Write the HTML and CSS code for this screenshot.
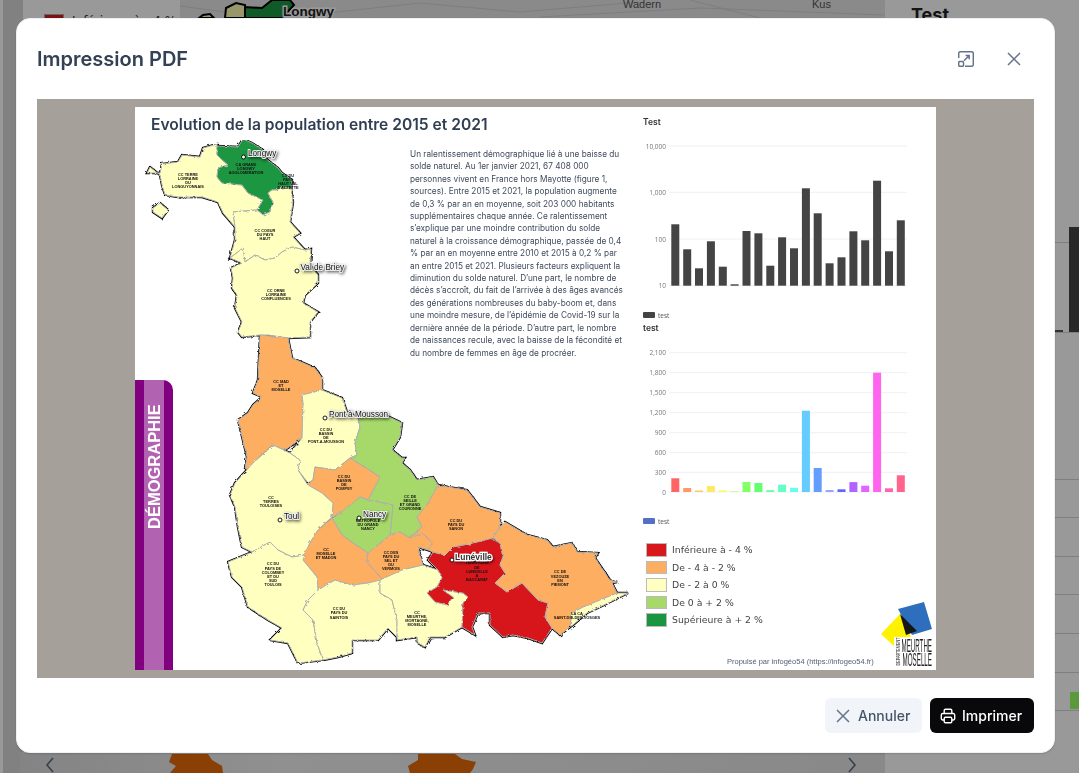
FILE: index.html
```html
<!DOCTYPE html>
<html lang="fr">
  <head>
    <meta charset="UTF-8" />
    <meta name="viewport" content="width=device-width, initial-scale=1.0" />
    <title>Impression PDF</title>
    <link rel="stylesheet" href="styles.css">
  </head>
  <body>
    <div class="page">
      <div class="rail"></div>
      <div class="side">
        <div class="side-key"><span class="side-swatch"></span>Inférieure à - 4 %</div>
      </div>
      <div class="bgmap">
        <svg class="bgmap-svg" viewBox="180 0 705 773" width="705" height="773">
          <path class="tile" d="M180 6 L240 14 M300 16 L420 3 L520 12 L640 2 M540 17 L700 8 L885 15 M690 0 L760 18" />
          <text class="tile-label" x="623" y="8">Wadern</text>
          <text class="tile-label" x="812" y="8">Kus</text>
          <polygon class="bg-yellow" points="199,18 203,15 210,14 214,18" />
          <polygon class="bg-yellow" points="225,18 226,8 236,3 245,5 245,18" />
          <polygon class="bg-green" points="245,18 245,7 262,8 272,0 290,0 294,5 282,18" />
          <text class="bg-city" x="283" y="16">Longwy</text>
        </svg>
      </div>
      <div class="right">
        <div class="right-title">Test</div>
        <div class="right-rows">
          <div class="right-row"></div>
          <div class="right-row right-row-bar"><i class="tick"></i><i class="bar"></i></div>
          <div class="right-gap"></div>
          <div class="right-row"></div>
          <div class="right-row"></div>
          <div class="right-row"></div>
          <div class="right-row"></div>
          <div class="right-row"></div>
          <div class="right-row"></div>
          <div class="right-row"><i class="green"></i></div>
        </div>
      </div>
      <div class="carousel">
        <svg class="chev" viewBox="0 0 10 16" width="10" height="16"><path d="M8 1 L2 8 L8 15" /></svg>
        <svg class="blobs" viewBox="0 0 300 19" width="300" height="19">
          <path d="M2 0 L38 0 L42 6 L52 12 L53 19 L0 19 L6 12 L-1 8 Z" />
          <path d="M248 0 L285 0 L292 5 L306 8 L303 15 L300 19 L240 19 L238 12 L248 6 Z" />
        </svg>
        <svg class="chev" viewBox="0 0 10 16" width="10" height="16"><path d="M2 1 L8 8 L2 15" /></svg>
      </div>
    </div>

    <div class="overlay"></div>

    <div class="modal">
      <div class="modal-head">
        <h2>Impression PDF</h2>
        <div class="head-icons">
          <svg class="icon" viewBox="0 0 16 16" width="16" height="16">
            <path d="M.7 7V2.5A1.8 1.8 0 0 1 2.5.7h11a1.8 1.8 0 0 1 1.8 1.8v11a1.8 1.8 0 0 1-1.8 1.8H7" />
            <rect x=".7" y="10.5" width="4.8" height="4.8" rx="1" />
            <path d="M6 9.8 L11 4.8 M7.6 4.6H11.2V8.2" />
          </svg>
          <svg class="icon" viewBox="0 0 14 14" width="14" height="14">
            <path d="M1 1 L13 13 M13 1 L1 13" />
          </svg>
        </div>
      </div>

      <div class="preview">
        <div class="paper">
          <div class="paper-left">
            <h1>Evolution de la population entre 2015 et 2021</h1>
            <svg class="map" viewBox="135 140 508 530" width="508" height="530">
              <defs>
                <filter id="rough" x="-5%" y="-5%" width="110%" height="110%">
                  <feTurbulence type="fractalNoise" baseFrequency="0.28" numOctaves="2" seed="4" />
                  <feDisplacementMap in="SourceGraphic" scale="3" />
                </filter>
                <filter id="glow" x="-30%" y="-60%" width="160%" height="220%">
                  <feDropShadow dx="1" dy="1.5" stdDeviation="1.4" flood-color="#000" flood-opacity=".6" />
                </filter>
                <g id="regions">
                  <polygon class="yellow" points="150,167 147,173 160,173 162,164 178,162 182,155 200,157 203,148 217,144 217,155 220,158 228,165 218,168 217,177 222,183 242,185 248,193 263,200 257,210 233,212 235,227 223,213 218,202 202,197 178,197 165,195 162,185 160,175" />
                  <polygon class="yellow" points="153,208 160,203 168,210 162,218 153,212" />
                  <polygon class="green-dark" points="217,146 238,147 243,139 252,143 263,150 265,158 278,168 282,173 292,180 291,188 280,188 277,190 272,190 268,193 273,202 270,212 263,215 257,210 263,200 248,193 242,185 222,183 217,177 218,168 228,165 220,158 217,155" />
                  <polygon class="yellow" points="233,212 257,210 263,215 270,212 273,202 268,193 272,190 277,190 280,188 291,188 293,202 290,222 300,233 293,237 305,250 292,247 282,252 275,258 265,260 255,255 245,262 243,248 230,258 235,240 235,227" />
                  <polygon class="yellow" points="230,258 243,248 245,262 255,255 265,260 275,258 282,252 292,247 305,250 311,249 310,265 318,275 318,283 305,295 303,303 318,312 310,322 310,337 288,338 268,335 260,335 242,337 238,332 242,322 235,308 237,295 232,288 233,278 231,268 242,263" />
                  <polygon class="orange" points="260,335 288,338 292,358 315,368 322,378 322,390 302,395 303,403 302,438 285,450 272,445 253,463 252,473 245,468 247,457 238,420 248,413 253,405 262,397 253,393 258,380" />
                  <polygon class="yellow" points="303,403 302,395 322,390 342,398 347,412 358,417 360,427 355,443 357,455 350,458 335,470 315,467 313,480 308,483 298,470 300,460 290,453 302,438" />
                  <polygon class="green-light" points="358,417 385,415 402,423 400,437 392,450 402,458 405,458 402,463 410,470 417,480 433,477 438,485 428,503 423,510 417,517 422,527 410,538 400,532 390,535 393,505 368,500 380,477 350,458 357,455 355,443 360,427" />
                  <polygon class="orange" points="315,467 335,470 350,458 380,477 368,500 360,497 338,515 332,517 333,503 322,493 308,485 313,480" />
                  <polygon class="green-light" points="332,518 338,515 360,497 368,500 393,505 390,535 368,553 353,543 342,535" />
                  <polygon class="yellow" points="273,445 290,453 300,460 298,470 308,485 322,493 333,503 332,517 318,530 310,543 305,555 292,557 278,550 270,542 252,552 242,547 238,527 235,507 230,495 235,483 253,463" />
                  <polygon class="orange" points="332,518 342,535 353,543 368,553 367,562 383,580 368,583 352,585 335,580 318,590 317,577 303,560 305,553 310,543 318,530" />
                  <polygon class="yellow" points="252,552 270,542 278,550 292,557 305,555 303,560 317,577 318,590 308,600 303,610 313,620 317,643 323,660 298,663 288,643 270,640 282,628 268,620 248,607 242,587 232,577 228,562" />
                  <polygon class="yellow" points="318,590 335,580 352,585 368,583 380,580 380,593 392,600 397,620 397,637 388,628 378,640 352,640 352,653 338,657 323,660 317,643 313,620 303,610 308,600" />
                  <polygon class="orange" points="367,562 368,553 390,535 400,532 410,538 422,533 433,543 428,550 418,547 423,565 402,570 400,582 383,580" />
                  <polygon class="yellow" points="380,580 402,570 423,565 438,570 442,578 437,587 427,593 443,590 463,593 468,597 463,603 462,627 445,637 430,637 425,647 418,643 417,637 397,640 397,620 392,600 380,593" />
                  <polygon class="red" points="428,560 433,552 445,555 453,547 473,543 490,538 500,543 503,557 500,565 505,573 495,583 507,592 522,583 538,600 548,603 545,617 552,628 542,643 528,638 513,635 503,637 490,625 490,613 478,613 472,627 475,635 462,627 463,603 468,597 463,593 443,590 453,597 447,605 435,602 427,593 437,587 442,578 438,570" />
                  <polygon class="orange" points="438,485 448,487 467,490 480,507 500,513 500,527 493,538 473,543 453,547 445,555 433,552 428,550 433,543 422,533 410,538 422,527 417,517 428,503" />
                  <polygon class="orange" points="500,527 505,522 527,535 547,540 553,547 572,543 577,552 598,553 595,558 610,580 617,582 612,583 617,593 600,600 583,607 572,613 570,627 560,635 552,628 545,617 548,603 538,600 522,583 507,592 495,583 505,573 500,565 503,557 500,543 493,538" />
                  <polygon class="yellow" points="572,613 583,607 600,600 617,593 628,593 600,607 587,613 573,625 570,627" />
                </g>
              </defs>
              <g filter="url(#rough)">
                <use href="#regions" class="edge" />
                <use href="#regions" class="inner" />
              </g>

              <g class="epci">
                <text x="188" y="176">CC TERRE</text><text x="188" y="180">LORRAINE</text><text x="188" y="184">DU</text><text x="188" y="188">LONGUYONNAIS</text>
                <text x="246" y="166">CA GRAND</text><text x="246" y="170">LONGWY</text><text x="246" y="174">AGGLOMERATION</text>
                <text x="288" y="177">CC DU</text><text x="288" y="181">PAYS</text><text x="288" y="185">HAUT VAL</text><text x="288" y="189">D'ALZETTE</text>
                <text x="265" y="232">CC COEUR</text><text x="265" y="236">DU PAYS</text><text x="265" y="240">HAUT</text>
                <text x="276" y="292">CC ORNE</text><text x="276" y="296">LORRAINE</text><text x="276" y="300">CONFLUENCES</text>
                <text x="281" y="383">CC MAD</text><text x="281" y="387">ET</text><text x="281" y="391">MOSELLE</text>
                <text x="326" y="431">CC DU</text><text x="326" y="435">BASSIN</text><text x="326" y="439">DE</text><text x="326" y="443">PONT-A-MOUSSON</text>
                <text x="344" y="478">CC DU</text><text x="344" y="482">BASSIN</text><text x="344" y="486">DE</text><text x="344" y="490">POMPEY</text>
                <text x="271" y="499">CC</text><text x="271" y="503">TERRES</text><text x="271" y="507">TOULOISES</text>
                <text x="368" y="522">METROPOLE</text><text x="368" y="526">DU GRAND</text><text x="368" y="530">NANCY</text>
                <text x="326" y="551">CC</text><text x="326" y="555">MOSELLE</text><text x="326" y="559">ET MADON</text>
                <text x="391" y="554">CC DES</text><text x="391" y="558">PAYS DU</text><text x="391" y="562">SEL ET</text><text x="391" y="566">DU</text><text x="391" y="570">VERMOIS</text>
                <text x="273" y="565">CC DU</text><text x="273" y="570">PAYS DE</text><text x="273" y="574">COLOMBEY</text><text x="273" y="578">ET DU</text><text x="273" y="582">SUD</text><text x="273" y="586">TOULOIS</text>
                <text x="339" y="610">CC DU</text><text x="339" y="614">PAYS DU</text><text x="339" y="619">SAINTOIS</text>
                <text x="410" y="498">CC DE</text><text x="410" y="502">SEILLE</text><text x="410" y="506">ET GRAND</text><text x="410" y="510">COURONNE</text>
                <text x="456" y="522">CC DU</text><text x="456" y="526">PAYS DU</text><text x="456" y="530">SANON</text>
                <text x="477" y="564">TERRITOIRE</text><text x="477" y="569">DE</text><text x="477" y="573">LUNEVILLE</text><text x="477" y="577">A</text><text x="477" y="581">BACCARAT</text>
                <text x="560" y="573">CC DE</text><text x="560" y="578">VEZOUZE</text><text x="560" y="582">EN</text><text x="560" y="586">PIEMONT</text>
                <text x="417" y="614">CC</text><text x="417" y="618">MEURTHE,</text><text x="417" y="622">MORTAGNE,</text><text x="417" y="626">MOSELLE</text>
                <text x="577" y="615">LA CA</text><text x="577" y="619">SAINT-DIE-DES-VOSGES</text>
              </g>

              <g class="cities">
                <circle cx="243.5" cy="157" r="2" /><text x="248" y="156">Longwy</text>
                <circle cx="297" cy="271" r="2" /><text x="300.5" y="270">Val de Briey</text>
                <circle cx="325" cy="418" r="2" /><text x="329" y="417">Pont à Mousson</text>
                <circle cx="280" cy="520" r="2" /><text x="284" y="519">Toul</text>
                <circle cx="359" cy="518" r="2" /><text x="363" y="517">Nancy</text>
                <circle cx="452" cy="560" r="2" /><text class="city-main" x="455" y="560">Lunéville</text>
              </g>
            </svg>
            <p class="intro">Un ralentissement démographique lié à une baisse du<br>solde naturel. Au 1er janvier 2021, 67 408 000<br>personnes vivent en France hors Mayotte (figure 1,<br>sources). Entre 2015 et 2021, la population augmente<br>de 0,3 % par an en moyenne, soit 203 000 habitants<br>supplémentaires chaque année. Ce ralentissement<br>s’explique par une moindre contribution du solde<br>naturel à la croissance démographique, passée de 0,4<br>% par an en moyenne entre 2010 et 2015 à 0,2 % par<br>an entre 2015 et 2021. Plusieurs facteurs expliquent la<br>diminution du solde naturel. D’une part, le nombre de<br>décès s’accroît, du fait de l’arrivée à des âges avancés<br>des générations nombreuses du baby-boom et, dans<br>une moindre mesure, de l’épidémie de Covid-19 sur la<br>dernière année de la période. D’autre part, le nombre<br>de naissances recule, avec la baisse de la fécondité et<br>du nombre de femmes en âge de procréer.</p>
            <div class="theme"><span>DÉMOGRAPHIE</span></div>
          </div>

          <div class="paper-right">
            <div class="chart-title">Test</div>
            <svg class="chart" viewBox="643 130 280 176" width="280" height="176">
              <g class="grid">
                <path d="M669 146H907 M669 192.3H907 M669 239H907 M669 285.7H907" />
              </g>
              <g class="ticks">
                <text x="666" y="148.5">10,000</text>
                <text x="666" y="194.8">1,000</text>
                <text x="666" y="241.5">100</text>
                <text x="666" y="288">10</text>
              </g>
              <g fill="#444444">
                <rect x="671.3" y="224.3" width="8" height="61.4" />
                <rect x="683.2" y="249.3" width="8" height="36.4" />
                <rect x="695" y="268.3" width="8" height="17.4" />
                <rect x="706.9" y="241.3" width="8" height="44.4" />
                <rect x="718.8" y="266.7" width="8" height="19" />
                <rect x="730.6" y="284.3" width="8" height="1.4" />
                <rect x="742.5" y="231" width="8" height="54.7" />
                <rect x="754.4" y="233.3" width="8" height="52.4" />
                <rect x="766.3" y="265.7" width="8" height="20" />
                <rect x="778.1" y="237.3" width="8" height="48.4" />
                <rect x="790" y="248.3" width="8" height="37.4" />
                <rect x="801.9" y="188.3" width="8" height="97.4" />
                <rect x="813.7" y="213.3" width="8" height="72.4" />
                <rect x="825.6" y="263.3" width="8" height="22.4" />
                <rect x="837.5" y="257.3" width="8" height="28.4" />
                <rect x="849.4" y="231.3" width="8" height="54.4" />
                <rect x="861.2" y="240.3" width="8" height="45.4" />
                <rect x="873.1" y="180.7" width="8" height="105" />
                <rect x="885" y="251.3" width="8" height="34.4" />
                <rect x="896.8" y="220.3" width="8" height="65.4" />
              </g>
            </svg>
            <div class="chart-key"><i class="key-dark"></i>test</div>
            <div class="chart-title chart-title-low">test</div>
            <svg class="chart" viewBox="643 340 280 170" width="280" height="170">
              <g class="grid">
                <path d="M669 352.7H907 M669 372.7H907 M669 392.7H907 M669 412.7H907 M669 432.7H907 M669 452.7H907 M669 472.3H907 M669 492H907" />
              </g>
              <g class="ticks">
                <text x="666" y="355">2,100</text>
                <text x="666" y="375">1,800</text>
                <text x="666" y="395">1,500</text>
                <text x="666" y="415">1,200</text>
                <text x="666" y="435">900</text>
                <text x="666" y="455">600</text>
                <text x="666" y="474.5">300</text>
                <text x="666" y="494.5">0</text>
              </g>
              <rect x="671.3" y="478.3" width="8" height="13.7" fill="#ff6464" />
              <rect x="683.2" y="488" width="8" height="4" fill="#ff9a64" />
              <rect x="695" y="490.5" width="8" height="1.5" fill="#ffc864" />
              <rect x="706.9" y="486" width="8" height="6" fill="#ffe964" />
              <rect x="718.8" y="490.3" width="8" height="1.7" fill="#f5ff64" />
              <rect x="730.6" y="491.3" width="8" height=".7" fill="#c0ff64" />
              <rect x="742.5" y="482" width="8" height="10" fill="#84ff64" />
              <rect x="754.4" y="483" width="8" height="9" fill="#64ff6e" />
              <rect x="766.3" y="490.2" width="8" height="1.8" fill="#64ffa0" />
              <rect x="778.1" y="484.7" width="8" height="7.3" fill="#64ffc8" />
              <rect x="790" y="487.8" width="8" height="4.2" fill="#64fff0" />
              <rect x="801.9" y="410.7" width="8" height="81.3" fill="#64ccff" />
              <rect x="813.7" y="468" width="8" height="24" fill="#649cff" />
              <rect x="825.6" y="490" width="8" height="2" fill="#9aa4ff" />
              <rect x="837.5" y="489.3" width="8" height="2.7" fill="#6464ff" />
              <rect x="849.4" y="482.1" width="8" height="9.9" fill="#b064ff" />
              <rect x="861.2" y="485.7" width="8" height="6.3" fill="#e064ff" />
              <rect x="873.1" y="372.7" width="8" height="119.3" fill="#ff64ee" />
              <rect x="885" y="488.3" width="8" height="3.7" fill="#ff64b4" />
              <rect x="896.8" y="475.3" width="8" height="16.7" fill="#ff648c" />
            </svg>
            <div class="chart-key chart-key-low"><i class="key-blue"></i>test</div>

            <ul class="classes">
              <li><i class="sw sw-red"></i>Inférieure à - 4 %</li>
              <li><i class="sw sw-orange"></i>De - 4 à - 2 %</li>
              <li><i class="sw sw-yellow"></i>De - 2 à 0 %</li>
              <li><i class="sw sw-light"></i>De 0 à + 2 %</li>
              <li><i class="sw sw-dark"></i>Supérieure à + 2 %</li>
            </ul>
            <div class="credit">Propulsé par infogéo54 (https://infogeo54.fr)</div>
            <svg class="logo" viewBox="0 0 54 64" width="54" height="64">
              <polygon fill="#fff200" points="19,12 0,32 14,45 30,35" />
              <polygon fill="#2e6fbd" points="17,7 43,0 51,27 31,33" />
              <polygon fill="#161616" points="19,12 36,29 25,33" />
              <rect x="13" y="35" width="41" height="29" fill="#fff" />
              <text class="logo-word" x="20.5" y="49.5" textLength="30.5" lengthAdjust="spacingAndGlyphs">MEURTHE</text>
              <text class="logo-word" x="21.5" y="63.5" textLength="29.5" lengthAdjust="spacingAndGlyphs">MOSELLE</text>
              <text class="logo-dept" transform="translate(18.5 63.5) rotate(-90)" textLength="28" lengthAdjust="spacingAndGlyphs">DEPARTEMENT</text>
            </svg>
          </div>
        </div>
      </div>

      <div class="modal-foot">
        <button class="btn btn-light">
          <svg class="icon" viewBox="0 0 14 14" width="14" height="14"><path d="M1 1 L13 13 M13 1 L1 13" /></svg>
          Annuler
        </button>
        <button class="btn btn-dark">
          <svg class="icon-print" viewBox="0 0 16 16" width="16" height="16">
            <path d="M4.2 5.5V2.5A1.3 1.3 0 0 1 5.5 1.2h5a1.3 1.3 0 0 1 1.3 1.3v3" />
            <path d="M4.2 12H2.8A1.5 1.5 0 0 1 1.3 10.500V7A1.500 1.500 0 0 1 2.800 5.500h10.400A1.500 1.500 0 0 1 14.700 7v3.500A1.500 1.500 0 0 1 13.200 12h-1.400" />
            <rect x="4.200" y="9.300" width="7.600" height="5.500" rx="1.200" />
          </svg>
          Imprimer
        </button>
      </div>
    </div>
  </body>
</html>
```

FILE: styles.css
```css
* {
  margin: 0;
  padding: 0;
  box-sizing: border-box;
  list-style: none;
}
html,
body {
  height: 100%;
  overflow: hidden;
}
body {
  font-family: "Inter", "Liberation Sans", sans-serif;
  background: #fff;
}

/* page behind the dialog */
.page {
  position: relative;
  display: flex;
  width: 1079px;
  height: 773px;
  overflow: hidden;
  background: #fff;
}
.rail {
  width: 20px;
  margin-left: 3px;
  flex: none;
  background: #d8d8d8;
}
.side {
  width: 157px;
  flex: none;
  padding: 14px 0 0 21px;
}
.side-key {
  display: flex;
  gap: 8px;
  font: 12px "DejaVu Sans", sans-serif;
  color: #333;
}
.side-swatch {
  width: 20px;
  height: 14px;
  background: #d7191c;
  border: 1px solid #aaa;
}
.bgmap {
  width: 705px;
  flex: none;
  height: 30px;
  background: #e6e6e6;
}
.bgmap-svg {
  display: block;
}
.tile {
  fill: none;
  stroke: #d2d2d2;
  stroke-width: 1;
}
.tile-label {
  font: 11px "Liberation Sans", sans-serif;
  fill: #555;
}
.bg-yellow {
  fill: #fffcb0;
  stroke: #000;
  stroke-width: 2;
}
.bg-green {
  fill: #1a9641;
  stroke: #000;
  stroke-width: 2;
}
.bg-city {
  font: bold 13.5px "Liberation Sans", sans-serif;
  fill: #222;
  paint-order: stroke;
  stroke: #fff;
  stroke-width: 3;
}
.right {
  flex: 1;
  padding: 4px 0 0 26px;
}
.right-title {
  font-size: 18px;
  font-weight: 700;
  color: #222;
}
.right-rows {
  margin: 36px 0 0 -20px;
  position: relative;
}
.right-row {
  height: 38.6px;
  border-bottom: 1px solid #d3d3e0;
}
.right-row:first-child {
  height: 182px;
}
.right-row-bar {
  position: relative;
  height: 90px;
}
.tick {
  position: absolute;
  right: 16px;
  bottom: 0;
  width: 8px;
  height: 2px;
  background: #555;
}
.bar {
  position: absolute;
  right: 0;
  bottom: 0;
  width: 10px;
  height: 105px;
  background: #444;
}
.right-gap {
  height: 108px;
}
.right-row .green {
  position: absolute;
  right: 0;
  bottom: 2px;
  width: 9px;
  height: 17px;
  background: #96ff64;
}
.carousel {
  position: absolute;
  left: 20px;
  bottom: 0;
  width: 865px;
  height: 20px;
  padding: 0 25px;
  display: flex;
  align-items: flex-end;
  background: linear-gradient(90deg, #dcdcdc, #f0f0f0 30%, #e4e4e4);
}
.chev {
  fill: none;
  stroke: #5a6b85;
  stroke-width: 1.6;
  flex: none;
}
.blobs {
  margin-left: 115px;
  margin-right: 377px;
  flex: none;
  fill: #e66908;
  overflow: visible;
}
.overlay {
  position: fixed;
  inset: 0;
  background: rgba(0, 0, 0, 0.4);
}

/* dialog */
.modal {
  position: fixed;
  left: 16px;
  top: 18px;
  width: 1039px;
  height: 735px;
  padding: 0 20px;
  background: #fff;
  border: 1px solid #eef2f6;
  border-radius: 14px;
  box-shadow: 0 1px 2px rgba(0, 0, 0, 0.15);
  display: flex;
  flex-direction: column;
}
.modal-head {
  height: 80px;
  flex: none;
  display: flex;
  align-items: center;
  justify-content: space-between;
}
.modal-head h2 {
  font-size: 20px;
  font-weight: 600;
  color: #334155;
}
.head-icons {
  display: flex;
  align-items: center;
  gap: 33px;
  margin-right: 13px;
}
.icon {
  fill: none;
  stroke: #64748b;
  stroke-width: 1.5;
  display: block;
}
.preview {
  height: 579px;
  flex: none;
  padding: 8px 98px;
  background: #a5a19a;
}
.modal-foot {
  flex: 1;
  display: flex;
  justify-content: flex-end;
  align-items: flex-start;
  gap: 8px;
  padding-top: 20px;
}
.btn {
  height: 35px;
  display: flex;
  align-items: center;
  border: 0;
  border-radius: 6px;
  font: 500 14px "Inter", "Liberation Sans", sans-serif;
}
.btn-light {
  width: 97px;
  gap: 8px;
  padding-left: 11px;
  background: #f1f5f9;
  color: #475569;
}
.btn-dark {
  width: 104px;
  gap: 6px;
  padding-left: 10px;
  background: #09090b;
  color: #fff;
}
.icon-print {
  fill: none;
  stroke: #fff;
  stroke-width: 1.4;
  display: block;
}

/* the printed sheet */
.paper {
  position: relative;
  display: flex;
  width: 801px;
  height: 563px;
  background: #fff;
  overflow: hidden;
  filter: blur(0.3px);
}
.paper-left {
  position: relative;
  width: 508px;
  flex: none;
}
.paper-left h1 {
  height: 33px;
  padding: 8px 0 0 16px;
  font-size: 15.6px;
  font-weight: 600;
  line-height: 19px;
  color: #2f3e52;
  white-space: nowrap;
}
.map {
  display: block;
}
.edge {
  stroke: #000;
  stroke-width: 2.4;
}
.inner {
  stroke: #b0b0b0;
  stroke-width: 1;
}
.yellow {
  fill: #ffffbf;
}
.orange {
  fill: #fdae61;
}
.red {
  fill: #d7191c;
}
.green-light {
  fill: #a6d96a;
}
.green-dark {
  fill: #1a9641;
}
.epci text {
  font: bold 3.9px "Liberation Sans", sans-serif;
  text-anchor: middle;
  fill: #111;
}
.cities text {
  font: 8.2px "Liberation Sans", sans-serif;
  fill: #111;
  paint-order: stroke;
  stroke: #eee;
  stroke-width: 1.8;
  filter: url(#glow);
}
.cities .city-main {
  font-weight: bold;
  font-size: 8.5px;
  fill: #333;
  stroke: #fff;
  stroke-width: 2.4;
}
.cities circle {
  fill: #fff;
  stroke: #000;
  stroke-width: 0.9;
}
.intro {
  position: absolute;
  left: 275px;
  top: 41px;
  font-size: 8.25px;
  line-height: 12.4px;
  color: #3f4b5c;
  white-space: nowrap;
}
.theme {
  position: absolute;
  left: 0;
  bottom: 0;
  width: 38px;
  height: 290px;
  padding: 0 9px;
  background: #800080;
  border-top-right-radius: 10px;
}
.theme span {
  display: block;
  width: 20px;
  height: 100%;
  padding-top: 141px;
  background: #b163b1;
  color: #fff;
  font: bold 16.5px/20px "Liberation Sans", sans-serif;
  writing-mode: vertical-rl;
  transform: rotate(180deg);
}
.paper-right {
  position: relative;
  flex: 1;
  display: flex;
  flex-direction: column;
  padding-top: 9px;
}
.chart-title {
  height: 12px;
  font-size: 8.5px;
  font-weight: 600;
  line-height: 12px;
  color: #333;
}
.chart {
  display: block;
  margin-top: 2px;
  flex: none;
}
.chart-title-low + .chart {
  margin-top: 6px;
}
.grid path {
  fill: none;
  stroke: #eef0f8;
  stroke-width: 1;
}
.ticks text {
  font: 6.5px "Open Sans", sans-serif;
  text-anchor: end;
  fill: #777;
}
.chart-key {
  height: 16px;
  display: flex;
  align-items: center;
  gap: 3px;
  font: 6.5px "Open Sans", sans-serif;
  color: #555;
  transform: translateY(1px);
}
.chart-key-low {
  margin-top: 3px;
  transform: none;
}
.chart-key i {
  width: 12px;
  height: 6px;
  border-radius: 1px;
}
.key-dark {
  background: #444;
}
.key-blue {
  background: #5470c6;
}
.classes {
  margin: 14px 0 0 3px;
  font: 9.3px "DejaVu Sans", sans-serif;
  color: #444;
}
.classes li {
  height: 13.5px;
  margin-bottom: 4px;
  display: flex;
  align-items: center;
  gap: 5px;
}
.sw {
  width: 21px;
  height: 13.5px;
  border: 1px solid #bbb;
}
.sw-red {
  background: #d7191c;
}
.sw-orange {
  background: #fdae61;
}
.sw-yellow {
  background: #ffffbf;
}
.sw-light {
  background: #a6d96a;
}
.sw-dark {
  background: #1a9641;
}
.credit {
  margin: auto 0 4px 84px;
  font: 7.5px "Liberation Sans", sans-serif;
  color: #55607a;
  white-space: nowrap;
}
.logo {
  position: absolute;
  left: 238px;
  top: 495px;
  overflow: visible;
}
.logo-word {
  font: 18px "Liberation Sans", sans-serif;
  fill: #222;
}
.logo-dept {
  font: 5px "Liberation Sans", sans-serif;
  fill: #222;
}
```
